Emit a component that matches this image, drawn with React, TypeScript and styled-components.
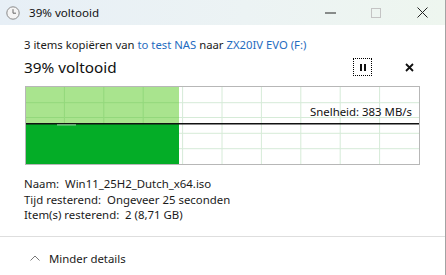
import React from "react";
import styled, { createGlobalStyle } from "styled-components";

const Global = createGlobalStyle`
  html, body { margin: 0; padding: 0; background: #ffffff; }
  body { font-family: "Noto Sans", "Open Sans", sans-serif; color: #1a1a1a; }
`;

const Window = styled.div`
  width: 446px;
  height: 275px;
  box-sizing: border-box;
  border-right: 1px solid #a3a3a3;
  background: #ffffff;
  display: flex;
  flex-direction: column;
  overflow: hidden;
`;

const TitleBar = styled.div`
  height: 25px;
  flex: none;
  display: flex;
  align-items: center;
  background: linear-gradient(90deg, #e7eff6 0%, #ecf3f4 55%, #eef6ef 100%);
  padding-left: 6px;
`;

const TitleText = styled.span`
  font-size: 11.6px;
  margin-left: 9px;
  color: #111;
  flex: 1;
`;

const WinButton = styled.div<{ $w: number }>`
  width: ${(p) => p.$w}px;
  height: 25px;
  display: flex;
  align-items: center;
  justify-content: center;
`;

const Content = styled.div`
  padding: 12px 0 0 24px;
  flex: 1;
  display: flex;
  flex-direction: column;
`;

const SubTitle = styled.div`
  font-size: 11.3px;
  line-height: 16px;
  color: #1a1a1a;
`;

const Link = styled.span`
  color: #1f6cc0;
`;

const HeadRow = styled.div`
  display: flex;
  align-items: center;
  height: 22px;
  margin-top: 3px;
`;

const BigTitle = styled.div`
  font-size: 15.3px;
  line-height: 22px;
  flex: 1;
  color: #111;
`;

const PauseButton = styled.div`
  width: 17px;
  height: 16px;
  border: 1px dotted #000;
  display: flex;
  align-items: center;
  justify-content: center;
  gap: 2px;
  margin-right: 32px;
`;

const PauseBar = styled.div`
  width: 2px;
  height: 7px;
  background: #111;
`;

const CloseButton = styled.div`
  width: 10px;
  height: 10px;
  display: flex;
  align-items: center;
  justify-content: center;
  margin-right: 31px;
`;

const Chart = styled.div`
  position: relative;
  margin-top: 8px;
  margin-left: 1px;
  width: 395px;
  height: 79px;
  box-sizing: border-box;
  border: 1px solid #b7b7b7;
`;

const ChartSvg = styled.svg`
  display: block;
`;

const Speed = styled.span`
  position: absolute;
  right: 7px;
  top: 17px;
  font-size: 11.4px;
  line-height: 16px;
  color: #111;
`;

const Details = styled.div`
  margin-top: 11px;
  display: flex;
  flex-direction: column;
`;

const DetailLine = styled.div`
  font-size: 11.4px;
  line-height: 15.5px;
  color: #1a1a1a;
  white-space: pre;
`;

const Divider = styled.div`
  height: 1px;
  background: #dedede;
  margin-top: auto;
  flex: none;
`;

const Footer = styled.div`
  height: 38px;
  box-sizing: border-box;
  padding-top: 4px;
  flex: none;
  display: flex;
  align-items: center;
  padding-left: 30px;
  gap: 9px;
`;

const FooterText = styled.span`
  font-size: 11.4px;
  color: #1a1a1a;
`;

const W = 393;
const H = 77;
const colX = Array.from({ length: 9 }, (_, i) => 38.4 + i * 39.4);
const rowY = [15.7, 30.5, 46.3, 61.7];
const fillW = 153;
const lineY = 36.7;

function SpeedChart() {
  return (
    <ChartSvg width={W} height={H} viewBox={`0 0 ${W} ${H}`}>
      <rect x={0} y={0} width={W} height={H} fill="#ffffff" />
      {colX.map((x) => (
        <line key={"v" + x} x1={x} x2={x} y1={0} y2={H} stroke="#d6ebd8" strokeWidth={1} />
      ))}
      {rowY.map((y) => (
        <line key={"h" + y} x1={0} x2={W} y1={y} y2={y} stroke="#d6ebd8" strokeWidth={1} />
      ))}
      <rect x={0} y={0} width={fillW} height={lineY} fill="#a9e48e" />
      {colX
        .filter((x) => x < fillW)
        .map((x) => (
          <line key={"gv" + x} x1={x} x2={x} y1={0} y2={lineY} stroke="#93d87c" strokeWidth={1} />
        ))}
      {rowY
        .filter((y) => y < lineY)
        .map((y) => (
          <line key={"gh" + y} x1={0} x2={fillW} y1={y} y2={y} stroke="#93d87c" strokeWidth={1} />
        ))}
      <rect x={0} y={lineY} width={fillW} height={H - lineY} fill="#04ad27" />
      <line x1={0} x2={W} y1={lineY} y2={lineY} stroke="#111" strokeWidth={1.4} />
      <line x1={31} x2={50} y1={lineY + 1.2} y2={lineY + 1.2} stroke="#cfeecf" strokeWidth={0.8} />
    </ChartSvg>
  );
}

export default function App() {
  return (
    <>
      <Global />
      <Window>
        <TitleBar>
          <svg width="14" height="14" viewBox="0 0 14 14">
            <circle cx="7" cy="7" r="6.2" fill="#f4f4f4" stroke="#8a8a8a" strokeWidth="1" />
            <path d="M7 3.2 V7.2 H10" fill="none" stroke="#666" strokeWidth="1" />
          </svg>
          <TitleText>39% voltooid</TitleText>
          <WinButton $w={46}>
            <svg width="11" height="2" viewBox="0 0 11 2">
              <line x1="0" x2="11" y1="1" y2="1" stroke="#222" strokeWidth="1" />
            </svg>
          </WinButton>
          <WinButton $w={46}>
            <svg width="10" height="10" viewBox="0 0 10 10">
              <rect x="0.5" y="0.5" width="9" height="9" fill="none" stroke="#c4c4c4" strokeWidth="1" />
            </svg>
          </WinButton>
          <WinButton $w={46}>
            <svg width="11" height="11" viewBox="0 0 11 11">
              <path d="M0.5 0.5 L10.5 10.5 M10.5 0.5 L0.5 10.5" stroke="#222" strokeWidth="1" />
            </svg>
          </WinButton>
        </TitleBar>
        <Content>
          <SubTitle>
            3 items kopiëren van <Link>to test NAS</Link> naar <Link>ZX20IV EVO (F:)</Link>
          </SubTitle>
          <HeadRow>
            <BigTitle>39% voltooid</BigTitle>
            <PauseButton>
              <PauseBar />
              <PauseBar />
            </PauseButton>
            <CloseButton>
              <svg width="9" height="9" viewBox="0 0 9 9">
                <path d="M1 1 L8 8 M8 1 L1 8" stroke="#111" strokeWidth="1.8" />
              </svg>
            </CloseButton>
          </HeadRow>
          <Chart>
            <SpeedChart />
            <Speed>Snelheid: 383 MB/s</Speed>
          </Chart>
          <Details>
            <DetailLine>Naam:  Win11_25H2_Dutch_x64.iso</DetailLine>
            <DetailLine>Tijd resterend:  Ongeveer 25 seconden</DetailLine>
            <DetailLine>Item(s) resterend:  2 (8,71 GB)</DetailLine>
          </Details>
        </Content>
        <Divider />
        <Footer>
          <svg width="10" height="6" viewBox="0 0 10 6">
            <path d="M0.5 5.5 L5 1 L9.5 5.5" fill="none" stroke="#777" strokeWidth="1" />
          </svg>
          <FooterText>Minder details</FooterText>
        </Footer>
      </Window>
    </>
  );
}
